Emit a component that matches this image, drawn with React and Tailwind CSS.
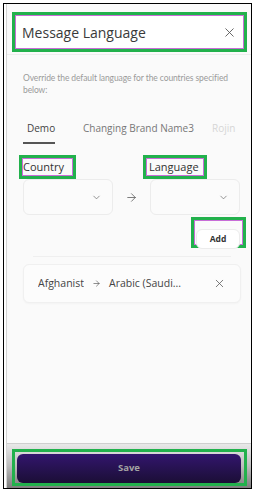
import React from "react";
import { ChevronDown, X, ArrowRight } from "lucide-react";

// Highlight box drawn around a region (green outer, pink inner line)
function Marked({ className = "", children, pink = true }) {
  return (
    <div className={`border-[3px] border-[#22b14c] ${className}`}>
      <div className={`h-full ${pink ? "border border-[#c86dd7]" : ""}`}>{children}</div>
    </div>
  );
}

function SelectBox() {
  return (
    <div className="h-[36px] w-[90px] rounded-md border border-[#ececec] bg-[#fbfbfb] flex items-center justify-end pr-[10px]">
      <ChevronDown size={11} strokeWidth={1.5} className="text-[#666]" />
    </div>
  );
}

export default function App() {
  const tabs = [
    { name: "Demo", active: true, cls: "w-[32px]" },
    { name: "Changing Brand Name3", cls: "w-[120px] ml-[24px]" },
    { name: "Rojin", faded: true, cls: "ml-[9px]" },
  ];

  return (
    <div
      className="w-[256px] h-[495px] bg-white pt-[3px] pl-[3px]"
      style={{ fontFamily: '"Open Sans", sans-serif' }}
    >
      <div className="w-[249px] h-[486px] border border-black flex">
        <div className="ml-[2px] flex-1 min-w-0 overflow-hidden border-l border-[#d4d4d4] bg-[#fafafa] flex flex-col">
          {/* Header */}
          <div className="pt-[8px] pl-[5px] pr-[4px] bg-[#fafafa]">
            <Marked className="h-[40px]">
              <div className="h-full bg-white flex items-center justify-between pl-[6px] pr-[6px]">
                <span className="text-[14px] text-[#3a3a3a] font-normal">Message Language</span>
                <X size={15} strokeWidth={1.4} className="text-[#555]" />
              </div>
            </Marked>
          </div>
          <div className="h-[3px] border-b border-[#ededed]" />

          {/* Body */}
          <div className="flex-1 pl-[16px] pr-[10px]">
            <p
              className="mt-[17px] text-[8.5px] tracking-[-0.1px] leading-[12px] text-[#9a9a9a] whitespace-nowrap"
              style={{ fontFamily: "Lato, sans-serif" }}
            >
              Override the default language for the countries specified
              <br />
              below:
            </p>

            {/* Tabs */}
            <div className="mt-[25px] flex overflow-hidden text-[10px] leading-[14px] whitespace-nowrap">
              {tabs.map((t) => (
                <div
                  key={t.name}
                  className={`${t.cls} shrink-0 px-[4px] pb-[7px] ${t.active ? "border-b-2 border-[#555] text-[#444]" : "text-[#777]"} ${t.faded ? "text-[#d6d6d6]" : ""}`}
                >
                  {t.name}
                </div>
              ))}
            </div>

            {/* Country / Language */}
            <div className="mt-[11px] flex">
              <div className="w-[90px]">
                <Marked className="w-[57px] h-[24px] -ml-[4px]">
                  <div className="h-full flex items-center text-[11px] text-[#333]">Country</div>
                </Marked>
                <SelectBox />
              </div>
              <div className="w-[37px] pt-[24px] h-[60px] flex items-center justify-center">
                <ArrowRight size={13} strokeWidth={1.4} className="text-[#555]" />
              </div>
              <div className="w-[90px]">
                <Marked className="w-[64px] h-[24px] -ml-[7px]">
                  <div className="h-full flex items-center pl-[2px] text-[11px] text-[#333]">Language</div>
                </Marked>
                <SelectBox />
              </div>
            </div>

            {/* Add */}
            <div className="mt-[2px] flex justify-end -mr-[5px]">
              <Marked className="w-[55px] h-[31px]">
                <div className="pt-[3px] pl-[1px] pr-[2px]">
                  <button className="w-full h-[20px] rounded-md border border-[#ececec] bg-white text-[8.5px] font-bold text-[#333]">
                    Add
                  </button>
                </div>
              </Marked>
            </div>

            <div className="mt-[8px] mx-[10px] border-t border-[#efefef]" />

            {/* Mapping row */}
            <div className="mt-[7px] h-[39px] rounded-md border border-[#f0f0f0] bg-[#fcfcfc] shadow-[0_1px_2px_rgba(0,0,0,0.03)] flex items-center pl-[14px] pr-[14px] text-[10.5px] text-[#444]">
              <span className="w-[46px] overflow-hidden whitespace-nowrap">Afghanistan</span>
              <ArrowRight size={9} strokeWidth={1.6} className="ml-[8px] text-[#444]" />
              <span className="ml-[8px]">Arabic (Saudi...</span>
              <X size={13} strokeWidth={1.4} className="ml-auto text-[#555]" />
            </div>
          </div>

          {/* Footer */}
          <div className="h-[45px] border-t border-[#cfcfcf] bg-gradient-to-b from-[#e9e9e9] via-[#bdbdbd] to-[#7d7d7d] pt-[5px] pl-[5px] pr-[4px]">
            <Marked className="h-[37px]" pink={false}>
              <div className="pt-[1px] pl-[2px] pr-[3px]">
                <button className="w-full h-[29px] rounded-[6px] bg-gradient-to-b from-[#33156e] to-[#1b0e36] text-[9.5px] font-bold text-[#a3a3a3]">
                  Save
                </button>
              </div>
            </Marked>
          </div>
        </div>
      </div>
    </div>
  );
}
